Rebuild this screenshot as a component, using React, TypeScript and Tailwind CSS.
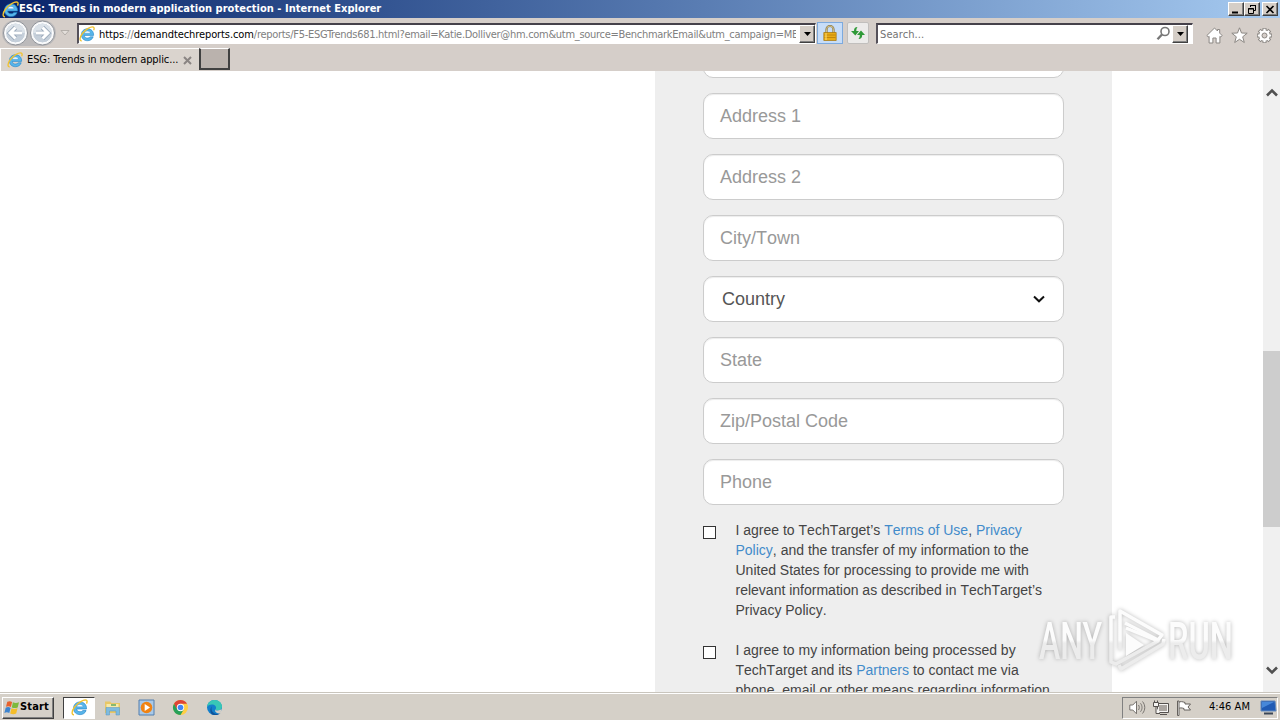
import type { ReactNode } from "react";

const CHROME_FONT = "font-['DejaVu_Sans_Condensed','DejaVu_Sans',sans-serif]";

function IeIcon({ size = 16 }: { size?: number }) {
  return (
    <svg width={size} height={size} viewBox="0 0 16 16" fill="none" className="shrink-0">
      <path
        d="M14.600 9.400H5.300c.2 1.800 1.500 2.600 3.200 2.600 1.200 0 2.100-.4 2.700-1.200h3c-.8 2.500-2.900 3.900-5.700 3.900-3.600 0-6.100-2.300-6.100-5.900s2.500-6 6.100-6c3.800 0 6.300 2.600 6.100 6.600Z"
        fill="#58b5ea"
        stroke="#1f83c8"
        strokeWidth=".6"
      />
      <path d="M5.400 7.300h5.900c-.2-1.400-1.300-2.200-2.900-2.200s-2.700.8-3 2.200Z" fill="#f4faff" stroke="#1f83c8" strokeWidth=".3" />
      <path
        d="M2.800 14.800C.2 15 .6 11.300 3.400 7.500 6.600 3.400 12 .1 14.400 1.100c1 .5.900 1.900.2 3.200"
        stroke="#f2c22e"
        strokeWidth="1.300"
      />
    </svg>
  );
}

function NavButton({ flip = false }: { flip?: boolean }) {
  return (
    <svg width="27" height="26" viewBox="0 0 27 26" fill="none" className="shrink-0">
      <circle cx="13.500" cy="13" r="12" fill="#f6f7f9" stroke="#8f9298" />
      <circle cx="13.500" cy="13" r="10" fill="#c5cfda" stroke="#fff" strokeWidth="1" />
      <path d="M4 13a9.500 9.500 0 0 1 19 0Z" fill="#dbe2e9" />
      <path
        d={flip ? "M7 13h11M13.500 7.500l5.500 5.500-5.500 5.500" : "M20 13H9M13.500 7.500 8 13l5.500 5.500"}
        stroke="#9aa9ba"
        strokeWidth="4.600"
      />
      <path
        d={flip ? "M7 13h11M13.500 7.500l5.500 5.500-5.500 5.500" : "M20 13H9M13.500 7.500 8 13l5.500 5.500"}
        stroke="#fff"
        strokeWidth="3"
      />
    </svg>
  );
}

function DropButton() {
  return (
    <div className="flex h-[18px] w-4 shrink-0 items-center justify-center border border-t-white border-r-[#404040] border-b-[#404040] border-l-white bg-[#d5cec7] shadow-[inset_-1px_-1px_0_#808080]">
      <svg width="7" height="4" viewBox="0 0 7 4">
        <path d="M0 0h7L3.500 4Z" fill="#000" />
      </svg>
    </div>
  );
}

function WindowButton({ children }: { children: ReactNode }) {
  return (
    <div className="flex h-[14px] w-4 items-center justify-center border border-t-white border-r-[#404040] border-b-[#404040] border-l-white bg-[#d5cec7] shadow-[inset_-1px_-1px_0_#808080]">
      <svg width="12" height="11" viewBox="0 0 12 11" fill="none" stroke="#000">
        {children}
      </svg>
    </div>
  );
}

function TitleBar() {
  return (
    <div className="flex h-[18px] shrink-0 items-center bg-linear-to-r from-[#0a246a] to-[#a6caf0] pr-[2px] pl-[2px]">
      <IeIcon size={17} />
      <span className="flex-1 text-[11px] leading-[18px] font-bold tracking-[0.025px] whitespace-nowrap text-white">
        ESG: Trends in modern application protection - Internet Explorer
      </span>
      <div className="flex">
        <WindowButton>
          <path d="M2 8.500h6" strokeWidth="2" />
        </WindowButton>
        <WindowButton>
          <path d="M4.500 3V1.500h5v5H8M4 1.500h6" />
          <path d="M2.500 4.500h5v5h-5ZM2 5h6" />
        </WindowButton>
      </div>
      <div className="ml-[2px]">
        <WindowButton>
          <path d="m2.500 2 7 7m0-7-7 7" strokeWidth="1.600" />
        </WindowButton>
      </div>
    </div>
  );
}

function AddressRow() {
  return (
    <div className="flex h-[30px] shrink-0 items-center">
      <div className="ml-[2px] flex w-[54px] shrink-0 rounded-full bg-[#bcbabb]">
        <NavButton />
        <NavButton flip />
      </div>
      <svg width="10" height="6" viewBox="0 0 10 6" fill="none" className="ml-1 shrink-0">
        <path d="M1 .5h8L5 5Z" fill="#e4dfdb" stroke="#aaa4a0" strokeWidth=".8" />
      </svg>
      <div className="ml-[7px] flex h-[21px] w-[739px] shrink-0 items-center border-t-2 border-r border-b border-l-2 border-t-[#45414a] border-r-white border-b-white border-l-[#55515a] bg-white">
        <IeIcon />
        <div className="ml-1 flex w-[697px] overflow-hidden pt-px text-[11px] leading-[17px] whitespace-nowrap text-[#808080]">
          <span className="tracking-[-0.09px] text-black">
            https<span className="text-[#808080]">://</span>demandtechreports.com
          </span>
          <span className="tracking-[-0.29px]">
            /reports/F5-ESGTrends681.html?email=Katie.Dolliver@hm.com&amp;utm_source=BenchmarkEmail&amp;utm_campaign=ME
          </span>
        </div>
        <div className="ml-auto">
          <DropButton />
        </div>
      </div>
      <div className="ml-px flex h-[22px] w-[26px] shrink-0 items-center justify-center border border-[#7daade] bg-[#c7ddf8]">
        <svg width="14" height="16" viewBox="0 0 14 16" fill="none">
          <path d="M3.500 8V4.500a3.500 3.500 0 0 1 7 0V8" stroke="#8c7a48" strokeWidth="2.200" />
          <path d="M3.500 8V4.500a3.500 3.500 0 0 1 7 0V8" stroke="#e0d199" strokeWidth=".8" />
          <path d="M.8 7.500h12.400v8H.8Z" fill="#e9ac16" stroke="#a57309" strokeWidth=".7" />
          <path d="M1.500 10h11M1.500 12.500h11" stroke="#b97e08" strokeWidth=".8" />
          <path d="M3 8.200v6.800" stroke="#ffe07a" />
        </svg>
      </div>
      <div className="ml-1 flex h-[22px] w-[22px] shrink-0 items-center justify-center rounded-[2px] border border-[#c1bfbd] bg-[#ecebea]">
        <svg width="16" height="14" viewBox="0 0 16 14" fill="#2f9a38">
          <path d="M7.500 1C5 1 4 2.500 4 5H1l4.300 4.500L9 5H6.300c0-2 .3-2.700 1.200-4Z" />
          <path d="M8.500 13c2.500 0 3.700-1.500 3.700-4H15l-4-4.500L7 9h2.800c0 2-.4 2.700-1.300 4Z" />
        </svg>
      </div>
      <div className="ml-[7px] flex h-[21px] w-[317px] shrink-0 items-center border-t-2 border-r border-b border-l-2 border-t-[#45414a] border-r-white border-b-white border-l-[#55515a] bg-white pl-[2px] text-[11px] tracking-[0.1px] text-[#737373]">
        <span className="flex-1 pt-[2px] leading-[16px]">Search...</span>
        <svg width="15" height="15" viewBox="0 0 15 15" fill="none" stroke="#777" className="mr-px">
          <circle cx="9" cy="5.500" r="4" strokeWidth="1.600" />
          <path d="m6 8.500-4.500 4.800" strokeWidth="2.400" />
        </svg>
        <div className="mr-1">
          <DropButton />
        </div>
      </div>
      <div className="ml-[13px] flex items-center gap-2 pt-1">
        <svg width="17" height="17" viewBox="0 0 17 17" fill="#fff" stroke="#8b8783" strokeLinejoin="round">
          <path d="M8.500 1 .8 8.600l1.500 1.300.8-.6V16h3.800v-5h3.200v5h3.800V9.300l.8.6 1.500-1.300-2.500-2.500V2.500h-2.200V4Z" />
        </svg>
        <svg width="17" height="17" viewBox="0 0 17 17" fill="#fff" stroke="#8b8783" strokeLinejoin="round">
          <path d="m8.500.8 2 5.200 5.700.2-4.500 3.600 1.600 5.700-4.800-3.200-4.800 3.200 1.600-5.700L.8 6.200 6.500 6Z" />
        </svg>
        <svg width="17" height="17" viewBox="0 0 17 17" fill="none">
          <path
            d="M8.500 1v15M1 8.500h15M3.200 3.200l10.600 10.600M13.800 3.200 3.200 13.800"
            stroke="#8b8783"
            strokeWidth="4"
          />
          <circle cx="8.500" cy="8.500" r="6.200" fill="#8b8783" />
          <path
            d="M8.500 1.800v13.400M1.800 8.500h13.400M3.800 3.800l9.400 9.400M13.200 3.800l-9.400 9.400"
            stroke="#fff"
            strokeWidth="2.200"
          />
          <circle cx="8.500" cy="8.500" r="5.300" fill="#fff" />
          <circle cx="8.500" cy="8.500" r="2.500" fill="#d5cec9" stroke="#8b8783" />
        </svg>
      </div>
    </div>
  );
}

function TabRow() {
  return (
    <div className="flex h-[23px] shrink-0">
      <div className="flex w-[199px] items-center border-t border-l border-white bg-[#dad4ce] pl-[6px]">
        <IeIcon />
        <span className="ml-1 w-[156px] pt-px text-[11px] tracking-[-0.1px] whitespace-nowrap text-black">
          ESG: Trends in modern applic...
        </span>
        <svg width="9" height="9" viewBox="0 0 9 9" stroke="#8a8583" strokeWidth="2" className="shrink-0">
          <path d="m1 1 7 7m0-7L1 8" />
        </svg>
      </div>
      <div className="h-[22px] w-[31px] border-t border-r-2 border-b-2 border-l-2 border-t-white border-r-[#404040] border-b-[#404040] border-l-[#404040] bg-[#bab2ad]" />
    </div>
  );
}

function Field({ label }: { label: string }) {
  return (
    <div className="h-[46px] shrink-0 rounded-[10px] border border-[#ccc] bg-white px-4 text-[18px] leading-[44px] text-[#999] shadow-[inset_0_1px_1px_rgba(0,0,0,0.075)]">
      {label}
    </div>
  );
}

function Consent({ children }: { children: ReactNode }) {
  return (
    <div className="flex shrink-0 text-[14px] leading-5 text-[#444]">
      <div className="mt-[6px] h-[13px] w-[13px] shrink-0 border border-[#333] bg-white" />
      <p className="ml-[19.500px] whitespace-nowrap">{children}</p>
    </div>
  );
}

function Link({ children }: { children: ReactNode }) {
  return <span className="text-[#428bca]">{children}</span>;
}

function FormPanel() {
  return (
    <div className="ml-[655px] w-[457px] shrink-0 bg-[#eee] px-12 font-['Liberation_Sans',Arial,sans-serif] [font-kerning:none]">
      <div className="-mt-[39px] flex flex-col gap-[15px]">
        <Field label="" />
        <Field label="Address 1" />
        <Field label="Address 2" />
        <Field label="City/Town" />
        <div className="flex h-[46px] shrink-0 items-center justify-between rounded-[10px] border border-[#ccc] bg-white pr-[18px] pl-[18px] text-[18px] text-[#555] shadow-[inset_0_1px_1px_rgba(0,0,0,0.075)]">
          Country
          <svg width="12" height="8" viewBox="0 0 12 8" fill="none" stroke="#111" strokeWidth="2">
            <path d="m1 1.500 5 4.800 5-4.800" />
          </svg>
        </div>
        <Field label="State" />
        <Field label="Zip/Postal Code" />
        <Field label="Phone" />
        <div className="flex flex-col gap-5">
          <Consent>
            I agree to TechTarget’s <Link>Terms of Use</Link>, <Link>Privacy</Link>
            <br />
            <Link>Policy</Link>, and the transfer of my information to the
            <br />
            United States for processing to provide me with
            <br />
            relevant information as described in TechTarget’s
            <br />
            Privacy Policy.
          </Consent>
          <Consent>
            I agree to my information being processed by
            <br />
            TechTarget and its <Link>Partners</Link> to contact me via
            <br />
            phone, email or other means regarding information
          </Consent>
        </div>
      </div>
    </div>
  );
}

function ScrollBar() {
  return (
    <div className="ml-auto flex w-[17px] shrink-0 flex-col items-center bg-[#f0f0f0]">
      <svg width="12" height="9" viewBox="0 0 12 9" fill="none" stroke="#505050" strokeWidth="2.600" className="mt-[17px]">
        <path d="m1 7.500 5-5 5 5" />
      </svg>
      <div className="mt-[254px] h-[176px] w-full bg-[#cdcdcd]" />
      <svg width="12" height="9" viewBox="0 0 12 9" fill="none" stroke="#505050" strokeWidth="2.600" className="mt-auto mb-[17px]">
        <path d="m1 1.500 5 5 5-5" />
      </svg>
    </div>
  );
}

function Watermark() {
  return (
    <svg
      width="220"
      height="80"
      viewBox="0 0 220 80"
      className="absolute top-[600px] left-[1030px] overflow-visible drop-shadow-[0_0_2px_rgba(0,0,0,0.28)]"
    >
      <defs>
        <linearGradient id="mark" gradientUnits="userSpaceOnUse" x1="0" y1="0" x2="0" y2="80">
          <stop offset=".5" stopColor="#fcfcfc" />
          <stop offset=".54" stopColor="#ececec" />
        </linearGradient>
      </defs>
      <g fill="url(#mark)" fontFamily="Roboto, sans-serif" fontSize="51" fontWeight="500">
        <text x="9" y="59" textLength="63" lengthAdjust="spacingAndGlyphs">
          ANY
        </text>
        <text x="138" y="59" textLength="65" lengthAdjust="spacingAndGlyphs">
          RUN
        </text>
      </g>
      <g fill="none" stroke="url(#mark)" strokeWidth="3.500" strokeLinejoin="round">
        <path d="M90 50V11l42 24-4 5-33-17" />
        <path d="M85 17h-4v45l5 2 42-23-32-13" />
        <path d="m134 39-1 5-42 25-2-4" />
        <path d="M96 33v23l18-11Z" fill="#fcfcfc" stroke="none" />
      </g>
    </svg>
  );
}

function StartFlag() {
  return (
    <svg width="16" height="16" viewBox="0 0 16 16" className="shrink-0">
      <path d="M3.300 1.800c1.900-1 3.300-.8 4.800.1L6.900 7c-1.600-.9-3.100-1-4.900-.2Z" fill="#e8622c" />
      <path d="M8.900 2.300c1.900 1 3.900 1 6.100 0l-1.300 5.100c-2.100 1-3.900.9-5.900 0Z" fill="#7db93c" />
      <path d="M1.700 7.700c1.900-.9 3.300-.8 4.900.2l-1.300 5.200c-1.600-1-3.100-1-4.900-.2Z" fill="#3d84cf" />
      <path d="M7.500 8.300c2 1 3.900 1 6 0l-1.300 5.200c-2.200 1-4 .9-6-.1Z" fill="#f4bd28" />
    </svg>
  );
}

function TaskBar() {
  return (
    <div className="flex h-7 shrink-0 items-center border-t border-[#c9c5bd] bg-[#d5d0c8] shadow-[inset_0_1px_0_#fff]">
      <div className="mt-[2px] ml-[2px] flex h-[22px] w-[52px] items-center border border-t-white border-r-[#404040] border-b-[#404040] border-l-white pl-px shadow-[inset_-1px_-1px_0_#808080]">
        <StartFlag />
        <span className="text-[11px] font-bold tracking-[0.15px] text-black">Start</span>
      </div>
      <div className="mt-[2px] ml-[9px] flex h-[22px] w-8 items-center justify-center border border-t-[#404040] border-r-white border-b-white border-l-[#404040] bg-white">
        <IeIcon size={17} />
      </div>
      <div className="mt-[1px] ml-[9px] flex items-center gap-[17px]">
        <svg width="17" height="17" viewBox="0 0 17 17">
          <path d="M1 2.500h5l1.500 1.500H16v10H1Z" fill="#e8c766" />
          <path d="M2.500 5h12v7h-12Z" fill="#f8e9a9" />
          <path d="M2 8.500h13.500V16H12v-4H5.500v4H2Z" fill="#7ebbe0" stroke="#5595c1" strokeWidth=".5" />
          <path d="M7 6h5" stroke="#61a95f" strokeWidth="1.500" />
        </svg>
        <svg width="17" height="17" viewBox="0 0 17 17">
          <path d="M1 1h15v15H1Z" fill="#a9c9e8" stroke="#527fae" />
          <circle cx="8.500" cy="8.500" r="5.800" fill="#f08313" />
          <path d="M6.700 5v7l5.300-3.500Z" fill="#fff" />
        </svg>
        <svg width="17" height="17" viewBox="0 0 17 17">
          <circle cx="8.500" cy="8.500" r="7.500" fill="#ffce44" />
          <path d="M2 4.750A7.500 7.500 0 0 1 15 4.750H8.500v7.500H5.250Z" fill="#de4436" />
          <path d="M2 4.750a7.500 7.500 0 0 0 6.500 11.250l3.250-5.600H5.250Z" fill="#27a059" />
          <circle cx="8.500" cy="8.500" r="3.700" fill="#fff" />
          <circle cx="8.500" cy="8.500" r="2.800" fill="#4285f4" />
        </svg>
        <svg width="17" height="17" viewBox="0 0 17 17">
          <circle cx="8.500" cy="8.500" r="7.500" fill="#137fcb" />
          <path d="M1 8C1.500 3.500 5 1 8.700 1 13 1 16 4 16 7.500c0 2.700-2 4-4.300 4-1.700 0-2.500-.7-1.900-1.600C11 7.500 8.500 5.500 6 5.500 3.500 5.500 1.800 6.500 1 8Z" fill="#38c7b6" />
          <path d="M6 7.200c-1.800 3.300.7 7.300 4.700 7.700 1.300.1 2.700-.3 3.800-1C12.900 15.700 10.500 16.200 8 16c-3.700-.4-5-5.700-2-8.800Z" fill="#10539a" />
          <path d="M9.800 9.900c-.6.900.2 1.600 1.900 1.600 1.500 0 3-.5 3.900-1.700L14.500 14c-3.500.8-6.700-1.300-4.700-4.100Z" fill="#d5d0c8" />
        </svg>
      </div>
      <div className="mt-[2px] mr-[2px] ml-auto flex h-[22px] w-[156px] items-center border border-t-[#808080] border-r-white border-b-white border-l-[#808080] pl-[6px]">
        <svg width="17" height="15" viewBox="0 0 17 15" fill="none" stroke="#77736f">
          <path d="M.8 5h3l3.700-3.800v12.600L3.800 10h-3Z" fill="#fff" />
          <path d="M9.500 5c1 1.500 1 3.500 0 5M11.500 3.300c2 2.500 2 6 0 8.400M13.500 1.500c3 3.500 3 8.500 0 12" />
        </svg>
        <svg width="16" height="16" viewBox="0 0 16 16" fill="#f5f4f2" stroke="#55514e" className="ml-[7px]">
          <path d="M4.500 3.500h11v9h-11ZM7 14.500h7" />
          <path d="M6 5h8v6H6Z" fill="#aaa5a0" stroke="none" />
          <path d="M.5 2.500h5v4h-5ZM1.500.5v2M4.500.5v2M3 6.500v7h4" />
        </svg>
        <svg width="16" height="16" viewBox="0 0 16 16" fill="#fff" stroke="#65615d" className="ml-[7px]">
          <path d="M2.500 2.500c2-1.500 4-.8 6.500 0V4h5.500L12 7l2.500 3H8V8.500c-2.500-.8-4-.8-5.500 0" />
          <path d="M1.500 1v14.500h1.500V1Z" />
        </svg>
        <span className="ml-[17px] w-[50px] text-[11px] tracking-[0.05px] whitespace-nowrap text-black">4:46 AM</span>
        <svg width="17" height="15" viewBox="0 0 17 15" className="ml-[1px] shrink-0">
          <path d="M1 1h14l1 10H1Z" fill="#205bb4" stroke="#6289bb" />
          <path d="M2 2h12L2 8Z" fill="#4788d9" />
          <path d="M4 13.500h9" stroke="#3a4657" strokeWidth="2" />
        </svg>
      </div>
    </div>
  );
}

export default function App() {
  return (
    <div className={`relative flex h-[720px] w-[1280px] flex-col overflow-hidden bg-[#d5cec9] ${CHROME_FONT}`}>
      <TitleBar />
      <AddressRow />
      <TabRow />
      <main className="flex h-[621px] shrink-0 overflow-hidden bg-white">
        <FormPanel />
        <ScrollBar />
      </main>
      <TaskBar />
      <Watermark />
    </div>
  );
}
